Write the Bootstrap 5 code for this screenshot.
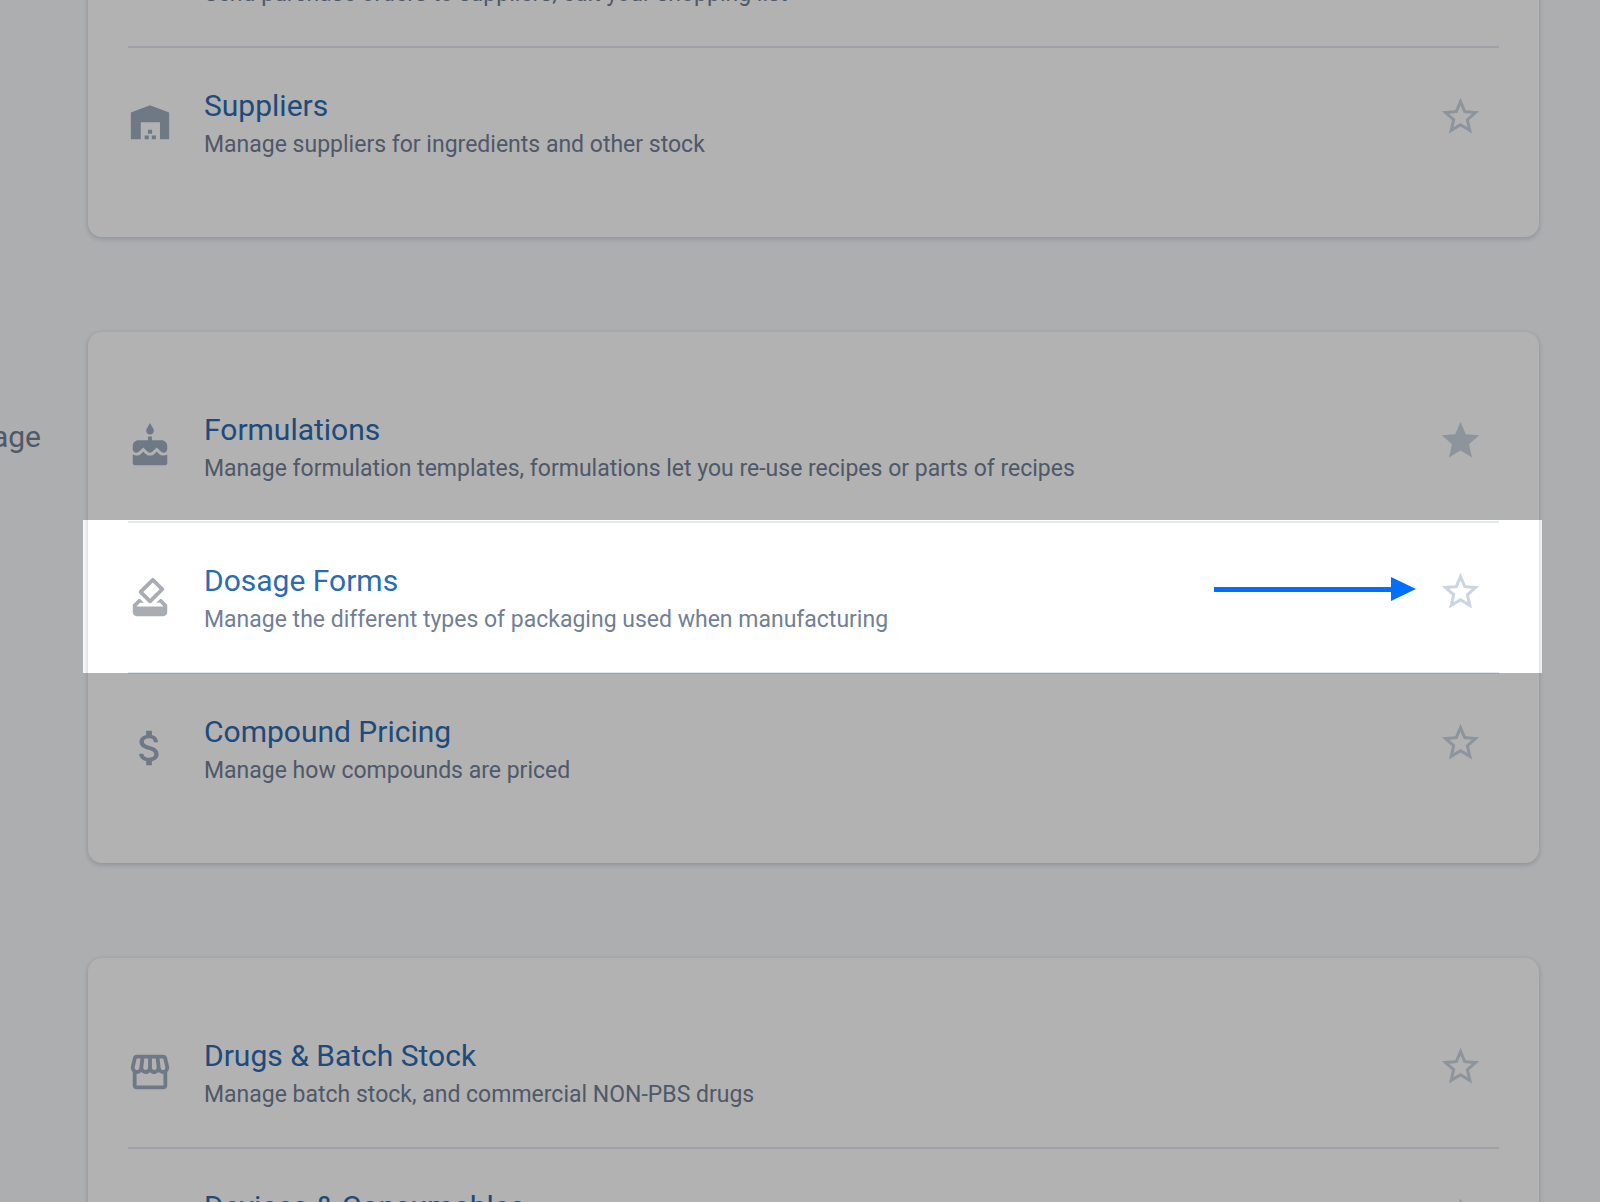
<!DOCTYPE html>
<html lang="en">
<head>
<meta charset="utf-8">
<meta name="viewport" content="width=device-width, initial-scale=1">
<title>Settings</title>
<link href="https://cdn.jsdelivr.net/npm/bootstrap@5.3.0/dist/css/bootstrap.min.css" rel="stylesheet">
<style>
  body { background: #f7fafc; font-family: Roboto, "Liberation Sans", sans-serif; color: #718096; }
  .viewport { height: 100vh; overflow: hidden; }
  /* the list is scrolled part of the way down */
  .scrolled { margin-top: -143px; }
  .settings-group { margin-bottom: 95px; padding-right: 61px; }
  .group-label { width: 88px; padding: 85px 47px 0 0; font-size: 30px; line-height: 40px; }
  .panel { border-radius: 14px; padding: 40px; box-shadow: 0 2px 6px rgba(45,55,90,.12), 0 1px 4px rgba(45,55,90,.12); min-width: 0; }
  .entry { padding: 38px 0 33px; }
  .entry + .entry { border-top: 2px solid #e2e8f0; }
  .entry-icon { width: 46px; height: 46px; margin: 13px 31px 0 -1px; fill: #a0aec0; }
  .entry-icon.neutral { fill: #a9adb3; }
  .entry-title { font-size: 30px; line-height: 40px; color: #2b6cb0; }
  .entry-text { font-size: 23px; line-height: 38px; }
  .star { margin-top: 8px; padding: 0 16px; fill: #cbd5e0; }
  .star svg { width: 45px; height: 45px; }
  /* everything outside the spotlight is dimmed by its spread shadow */
  .spotlight { inset: -3px -43px -1px -45px; box-shadow: 0 0 0 4000px rgba(0,0,0,.3); z-index: 5; pointer-events: none; }
  .pointer { width: 202px; height: 24px; top: 54px; right: 83px; fill: #0070fa; z-index: 6; }
</style>
<script src="https://cdn.jsdelivr.net/npm/bootstrap@5.3.0/dist/js/bootstrap.bundle.min.js"></script>
</head>
<body>
<svg class="d-none" xmlns="http://www.w3.org/2000/svg">
  <symbol id="star-open" viewBox="0 0 24 24"><path d="M22 9.24l-7.19-.62L12 2 9.19 8.63 2 9.24l5.46 4.73L5.82 21 12 17.27 18.18 21l-1.63-7.03L22 9.24zM12 15.4l-3.76 2.27 1-4.28-3.32-2.88 4.38-.38L12 6.1l1.71 4.04 4.38.38-3.32 2.88 1 4.28L12 15.4z"/></symbol>
  <symbol id="star-full" viewBox="0 0 24 24"><path d="M12 17.27L18.18 21l-1.64-7.03L22 9.24l-7.19-.61L12 2 9.19 8.63 2 9.24l5.46 4.73L5.82 21z"/></symbol>
</svg>
<div class="viewport">
<main class="scrolled">

  <section class="settings-group d-flex">
    <div class="group-label flex-shrink-0"></div>
    <div class="panel bg-white flex-grow-1">
      <div class="entry d-flex align-items-start">
        <svg class="entry-icon flex-shrink-0" viewBox="0 0 24 24" aria-hidden="true"><path d="M7 18a2 2 0 100 4 2 2 0 000-4zm10 0a2 2 0 100 4 2 2 0 000-4zM1 2v2h2l3.600 7.590-1.350 2.450C4.520 15.370 5.480 17 7 17h12v-2H7.420l1.130-2h7.450l4.500-9H5.210l-.94-2z"/></svg>
        <div class="flex-grow-1">
          <a class="entry-title d-block text-decoration-none" href="#orders">Orders</a>
          <div class="entry-text">Send purchase orders to suppliers, edit your shopping list</div>
        </div>
        <button class="star btn border-0 d-flex" type="button" aria-label="Add Orders to favourites"><svg><use href="#star-open"/></svg></button>
      </div>
      <div class="entry d-flex align-items-start">
        <svg class="entry-icon flex-shrink-0" viewBox="0 0 24 24" aria-hidden="true"><path d="M12 3.300L22 7V21H17.200V12.100H7.200V21H2V7zM10.900 16.100h2.200v2h-2.200zM9.200 19h2.200v2H9.200zM12.900 19h2.200v2h-2.200z"/></svg>
        <div class="flex-grow-1">
          <a class="entry-title d-block text-decoration-none" href="#suppliers">Suppliers</a>
          <div class="entry-text">Manage suppliers for ingredients and other stock</div>
        </div>
        <button class="star btn border-0 d-flex" type="button" aria-label="Add Suppliers to favourites"><svg><use href="#star-open"/></svg></button>
      </div>
    </div>
  </section>

  <section class="settings-group d-flex">
    <div class="group-label flex-shrink-0 d-flex justify-content-end"><span>age</span></div>
    <div class="panel bg-white flex-grow-1">
      <div class="entry d-flex align-items-start">
        <svg class="entry-icon flex-shrink-0" viewBox="0 0 24 24" aria-hidden="true"><path d="M12 6c1.110 0 2-.9 2-2 0-.38-.1-.73-.29-1.030L12 0l-1.710 2.970c-.19.3-.29.65-.29 1.030 0 1.100.9 2 2 2zm4.600 9.990l-1.070-1.070-1.080 1.070c-1.300 1.300-3.580 1.310-4.890 0l-1.070-1.070-1.090 1.070C6.750 16.640 5.880 17 4.960 17c-.73 0-1.400-.23-1.960-.61V21c0 .55.45 1 1 1h16c.55 0 1-.45 1-1v-4.610c-.56.38-1.230.61-1.960.61-.92 0-1.790-.36-2.440-1.010zM18 9h-5V7h-2v2H6c-1.660 0-3 1.340-3 3v1.540c0 1.080.88 1.960 1.960 1.960.52 0 1.020-.2 1.380-.57l2.140-2.130 2.130 2.130c.74.74 2.030.74 2.770 0l2.140-2.130 2.130 2.130c.37.37.86.57 1.380.57 1.080 0 1.960-.88 1.960-1.960V12C21 10.340 19.660 9 18 9z"/></svg>
        <div class="flex-grow-1">
          <a class="entry-title d-block text-decoration-none" href="#formulations">Formulations</a>
          <div class="entry-text">Manage formulation templates, formulations let you re-use recipes or parts of recipes</div>
        </div>
        <button class="star btn border-0 d-flex" type="button" aria-pressed="true" aria-label="Remove Formulations from favourites"><svg><use href="#star-full"/></svg></button>
      </div>
      <div class="entry d-flex align-items-start position-relative">
        <svg class="entry-icon neutral flex-shrink-0" viewBox="0 0 24 24" aria-hidden="true"><path d="M18 13h-.68l-2 2h1.910L19 17H5l1.780-2h2.050l-2-2H6l-3 3v4c0 1.100.89 2 1.990 2H19c1.100 0 2-.89 2-2v-4l-3-3zM11.340 15.020c.39.39 1.020.39 1.410 0l6.360-6.360c.39-.39.39-1.020 0-1.410L14.160 2.300c-.38-.4-1.010-.4-1.400-.01L6.390 8.660c-.39.39-.39 1.020 0 1.410l4.950 4.950zm2.120-10.610L17 7.950l-4.950 4.950-3.540-3.540 4.950-4.950z"/></svg>
        <div class="flex-grow-1">
          <a class="entry-title d-block text-decoration-none" href="#dosage">Dosage Forms</a>
          <div class="entry-text">Manage the different types of packaging used when manufacturing</div>
        </div>
        <button class="star btn border-0 d-flex" type="button" aria-label="Add Dosage Forms to favourites"><svg><use href="#star-open"/></svg></button>
        <div class="spotlight position-absolute"></div>
        <svg class="pointer position-absolute" viewBox="0 0 202 24" aria-hidden="true"><path d="M0 10H177V0L202 12L177 24V15H0z"/></svg>
      </div>
      <div class="entry d-flex align-items-start">
        <svg class="entry-icon flex-shrink-0" viewBox="0 0 24 24" aria-hidden="true"><path d="M11.800 10.900c-2.270-.59-3-1.200-3-2.150 0-1.090 1.010-1.850 2.700-1.850 1.780 0 2.440.85 2.500 2.100h2.210c-.07-1.720-1.120-3.300-3.210-3.810V3h-3v2.160c-1.940.42-3.500 1.680-3.500 3.610 0 2.310 1.910 3.460 4.700 4.130 2.500.6 3 1.480 3 2.410 0 .69-.49 1.790-2.700 1.790-2.060 0-2.870-.92-2.980-2.100h-2.200c.12 2.190 1.760 3.420 3.680 3.830V21h3v-2.150c1.950-.37 3.500-1.500 3.500-3.550 0-2.840-2.430-3.810-4.700-4.400z"/></svg>
        <div class="flex-grow-1">
          <a class="entry-title d-block text-decoration-none" href="#pricing">Compound Pricing</a>
          <div class="entry-text">Manage how compounds are priced</div>
        </div>
        <button class="star btn border-0 d-flex" type="button" aria-label="Add Compound Pricing to favourites"><svg><use href="#star-open"/></svg></button>
      </div>
    </div>
  </section>

  <section class="settings-group d-flex">
    <div class="group-label flex-shrink-0"></div>
    <div class="panel bg-white flex-grow-1">
      <div class="entry d-flex align-items-start">
        <svg class="entry-icon flex-shrink-0" viewBox="0 0 24 24" aria-hidden="true"><path d="M21.900 8.890l-1.050-4.370c-.22-.9-1-1.520-1.910-1.520H5.050c-.9 0-1.690.63-1.900 1.520L2.100 8.890c-.24 1.020-.02 2.060.62 2.880.08.11.19.19.28.29V19c0 1.100.9 2 2 2h14c1.100 0 2-.9 2-2v-6.940c.09-.09.2-.18.28-.28.64-.82.87-1.870.62-2.890zm-2.990-3.900l1.050 4.370c.1.42.01.84-.25 1.170-.14.18-.44.47-.94.47-.61 0-1.140-.49-1.210-1.140L16.980 5l1.930-.01zM13 5h1.960l.54 4.520c.05.39-.07.78-.33 1.070-.22.26-.54.41-.95.41-.67 0-1.220-.59-1.220-1.310V5zM8.490 9.520L9.040 5H11v4.690c0 .72-.55 1.310-1.290 1.310-.34 0-.65-.15-.89-.41-.25-.29-.37-.68-.33-1.070zm-4.450-.16L5.050 5h1.970l-.58 4.860c-.08.65-.6 1.140-1.210 1.140-.49 0-.8-.29-.93-.47-.27-.32-.36-.75-.26-1.170zM5 19v-6.030c.08.01.15.03.23.03.87 0 1.660-.36 2.240-.95.6.6 1.400.95 2.310.95.87 0 1.650-.36 2.230-.93.59.57 1.390.93 2.290.93.84 0 1.640-.35 2.240-.95.58.59 1.370.95 2.240.95.08 0 .15-.02.23-.03V19H5z"/></svg>
        <div class="flex-grow-1">
          <a class="entry-title d-block text-decoration-none" href="#drugs">Drugs &amp; Batch Stock</a>
          <div class="entry-text">Manage batch stock, and commercial NON-PBS drugs</div>
        </div>
        <button class="star btn border-0 d-flex" type="button" aria-label="Add Drugs and Batch Stock to favourites"><svg><use href="#star-open"/></svg></button>
      </div>
      <div class="entry d-flex align-items-start">
        <span class="entry-icon flex-shrink-0"></span>
        <div class="flex-grow-1">
          <a class="entry-title d-block text-decoration-none" href="#devices">Devices &amp; Consumables</a>
        </div>
        <button class="star btn border-0 d-flex" type="button" aria-label="Add Devices and Consumables to favourites"><svg><use href="#star-open"/></svg></button>
      </div>
    </div>
  </section>

</main>
</div>
</body>
</html>
